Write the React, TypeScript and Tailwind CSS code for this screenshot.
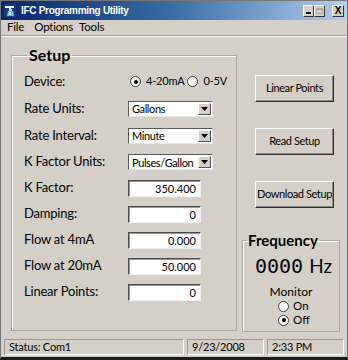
import { ReactNode } from 'react'

// ── Bits ──────────────────────────────────────────────────────────────────────

function Radio({ checked }: { checked?: boolean }) {
  return (
    <span className="flex h-[11px] w-[11px] shrink-0 items-center justify-center rounded-full border border-[#3c3c3c] bg-white">
      {checked && <span className="h-[4px] w-[4px] rounded-full bg-black" />}
    </span>
  )
}

function Select({ value }: { value: string }) {
  return (
    <div className="flex h-[16px] w-[85px] items-center border border-t-[#5a5a5a] border-l-[#5a5a5a] border-b-[#e8e8e8] border-r-[#e8e8e8] bg-white">
      <span className="flex-1 truncate pl-[3px] text-[11px] leading-none tracking-[-0.4px]">{value}</span>
      <span className="mr-[1px] flex h-[12px] w-[13px] shrink-0 items-center justify-center border border-t-white border-l-white border-b-[#555] border-r-[#555] bg-[#d4d0c8]">
        <svg width="7" height="4" viewBox="0 0 7 4">
          <path d="M0 0h7L3.5 4z" fill="#000" />
        </svg>
      </span>
    </div>
  )
}

function Input({ value }: { value: string }) {
  return (
    <div className="flex h-[17px] w-[73px] items-center justify-end border border-t-[#4a4a4a] border-l-[#4a4a4a] border-b-[#f2f2f2] border-r-[#f2f2f2] bg-white pr-[4px] text-[11px] leading-none shadow-[inset_1px_1px_0_#9a9a9a]">
      {value}
    </div>
  )
}

function Button({ children }: { children: ReactNode }) {
  return (
    <button
      type="button"
      className="flex h-[27px] w-[79px] items-center justify-center whitespace-nowrap border border-t-white border-l-white border-b-[#2e2e2e] border-r-[#2e2e2e] bg-[#d4d0c8] text-[11px] tracking-[-0.4px] shadow-[inset_-1px_-1px_0_#8a8a8a]"
    >
      {children}
    </button>
  )
}

function Row({ label, h = 'h-[26px]', children }: { label: string; h?: string; children: ReactNode }) {
  return (
    <div className={`flex items-center ${h}`}>
      <span className="w-[104px] text-[13px] tracking-[-0.2px]">{label}</span>
      {children}
    </div>
  )
}

function Panel({ className, children }: { className: string; children: ReactNode }) {
  return (
    <div className={`flex h-[16px] items-center border border-t-[#9a9a9a] border-l-[#9a9a9a] border-b-white border-r-white text-[11px] tracking-[-0.2px] ${className}`}>
      {children}
    </div>
  )
}

// ── App ───────────────────────────────────────────────────────────────────────

export default function App() {
  return (
    <div className="flex h-[360px] w-[348px] flex-col overflow-hidden border border-[#777] border-b-[3px] border-b-[#1a1a1a] bg-[#d4d0c8] font-['Lato',sans-serif] text-black">
      {/* Title bar */}
      <div className="flex h-[19px] shrink-0 items-center bg-linear-to-r from-[#0a246a] via-[#3a6ea5] to-[#b4cff0] pl-[3px] pr-[3px]">
        <svg width="12" height="13" viewBox="0 0 12 13" className="shrink-0">
          <rect x="0" y="0" width="12" height="13" fill="#1c3d7c" />
          <path d="M1 2h9v2H7v1H5V4H1z" fill="#e8f4ff" />
          <path d="M5 5h3v2H5z" fill="#bfe3ff" />
          <path d="M4 7h5l1 5H3z" fill="#6cc6f0" />
          <path d="M5 8h2v3H5z" fill="#e8f8ff" />
        </svg>
        <span className="ml-[5px] font-['Liberation_Sans',sans-serif] text-[10px] font-bold tracking-[-0.3px] text-white">
          IFC Programming Utility
        </span>
        <div className="flex-1" />
        <div className="flex">
          <span className="flex h-[12px] w-[11px] items-end justify-center border border-t-white border-l-white border-b-[#333] border-r-[#333] bg-[#d4d0c8] pb-[2px]">
            <span className="h-[2px] w-[5px] bg-black" />
          </span>
          <span className="flex h-[12px] w-[11px] items-center justify-center border border-t-white border-l-white border-b-[#333] border-r-[#333] bg-[#d4d0c8]">
            <span className="h-[6px] w-[7px] border border-t-2 border-[#a8a8a8]" />
          </span>
        </div>
        <span className="ml-[7px] flex h-[12px] w-[12px] items-center justify-center border border-t-white border-l-white border-b-[#333] border-r-[#333] bg-[#d4d0c8] font-['Liberation_Sans',sans-serif] text-[10px] font-bold leading-none">
          X
        </span>
      </div>

      {/* Menu */}
      <div className="flex h-[14px] shrink-0 items-center gap-[10px] pl-[6px] text-[11.5px] tracking-[-0.2px]">
        <span>File</span>
        <span className="-mr-[4px]">Options</span>
        <span>Tools</span>
      </div>
      <div className="mt-[1px] shrink-0 border-t border-b border-t-[#9c9a94] border-b-white" />

      {/* Body */}
      <div className="flex shrink-0 pt-[9px] pl-[10px]">
        <fieldset className="h-[285px] w-[226px] border border-[#a9a7a1] pl-[12px] shadow-[inset_1px_1px_0_#fff]">
          <legend className="ml-[3px] px-[2px] text-[16px] font-bold leading-[18px]">Setup</legend>
          <div className="mt-[4px] flex flex-col">
            <Row label="Device:" h="h-[27px]">
              <div className="ml-[2px] flex items-center text-[11px] tracking-[-0.2px]">
                <Radio checked />
                <span className="ml-[5px]">4-20mA</span>
                <span className="ml-[2px]"><Radio /></span>
                <span className="ml-[6px]">0-5V</span>
              </div>
            </Row>
            <Row label="Rate Units:" h="h-[27px]"><Select value="Gallons" /></Row>
            <Row label="Rate Interval:" h="h-[27px]"><Select value="Minute" /></Row>
            <Row label="K Factor Units:"><Select value="Pulses/Gallon" /></Row>
            <Row label="K Factor:"><Input value="350.400" /></Row>
            <Row label="Damping:"><Input value="0" /></Row>
            <Row label="Flow at 4mA"><Input value="0.000" /></Row>
            <Row label="Flow at 20mA"><Input value="50.000" /></Row>
            <Row label="Linear Points:"><Input value="0" /></Row>
          </div>
        </fieldset>

        <div className="ml-[5px] flex w-[98px] flex-col">
          <div className="ml-[13px] mt-[29px] flex flex-col gap-[26px]">
            <Button>Linear Points</Button>
            <Button>Read Setup</Button>
            <Button>Download Setup</Button>
          </div>
          <fieldset className="mt-[24px] h-[100px] border border-[#a9a7a1] shadow-[inset_1px_1px_0_#fff]">
            <legend className="ml-[3px] px-[2px] text-[15px] font-bold leading-[17px]">Frequency</legend>
            <div className="mt-[5px] flex items-baseline pl-[12px]">
              <span className="font-['DejaVu_Sans_Mono',monospace] text-[20px] leading-[24px]">0000</span>
              <span className="ml-[6px] text-[19px] leading-[24px]">Hz</span>
            </div>
            <div className="mt-[7px] flex flex-col items-center text-[12px] leading-[14px]">
              <span>Monitor</span>
              <div className="ml-[6px] flex flex-col">
                <div className="flex h-[14px] items-center gap-[4px]"><Radio /><span className="text-[11.5px] leading-[14px]">On</span></div>
                <div className="flex h-[14px] items-center gap-[4px]"><Radio checked /><span className="text-[11.5px] leading-[14px]">Off</span></div>
              </div>
            </div>
          </fieldset>
        </div>
      </div>

      {/* Status bar */}
      <div className="mt-[7px] flex shrink-0 gap-[3px] px-[3px]">
        <Panel className="w-[180px] pl-[4px]">Status: Com1</Panel>
        <Panel className="w-[77px] pl-[4px]">9/23/2008</Panel>
        <Panel className="flex-1 pl-[4px]">2:33 PM</Panel>
      </div>
    </div>
  )
}
